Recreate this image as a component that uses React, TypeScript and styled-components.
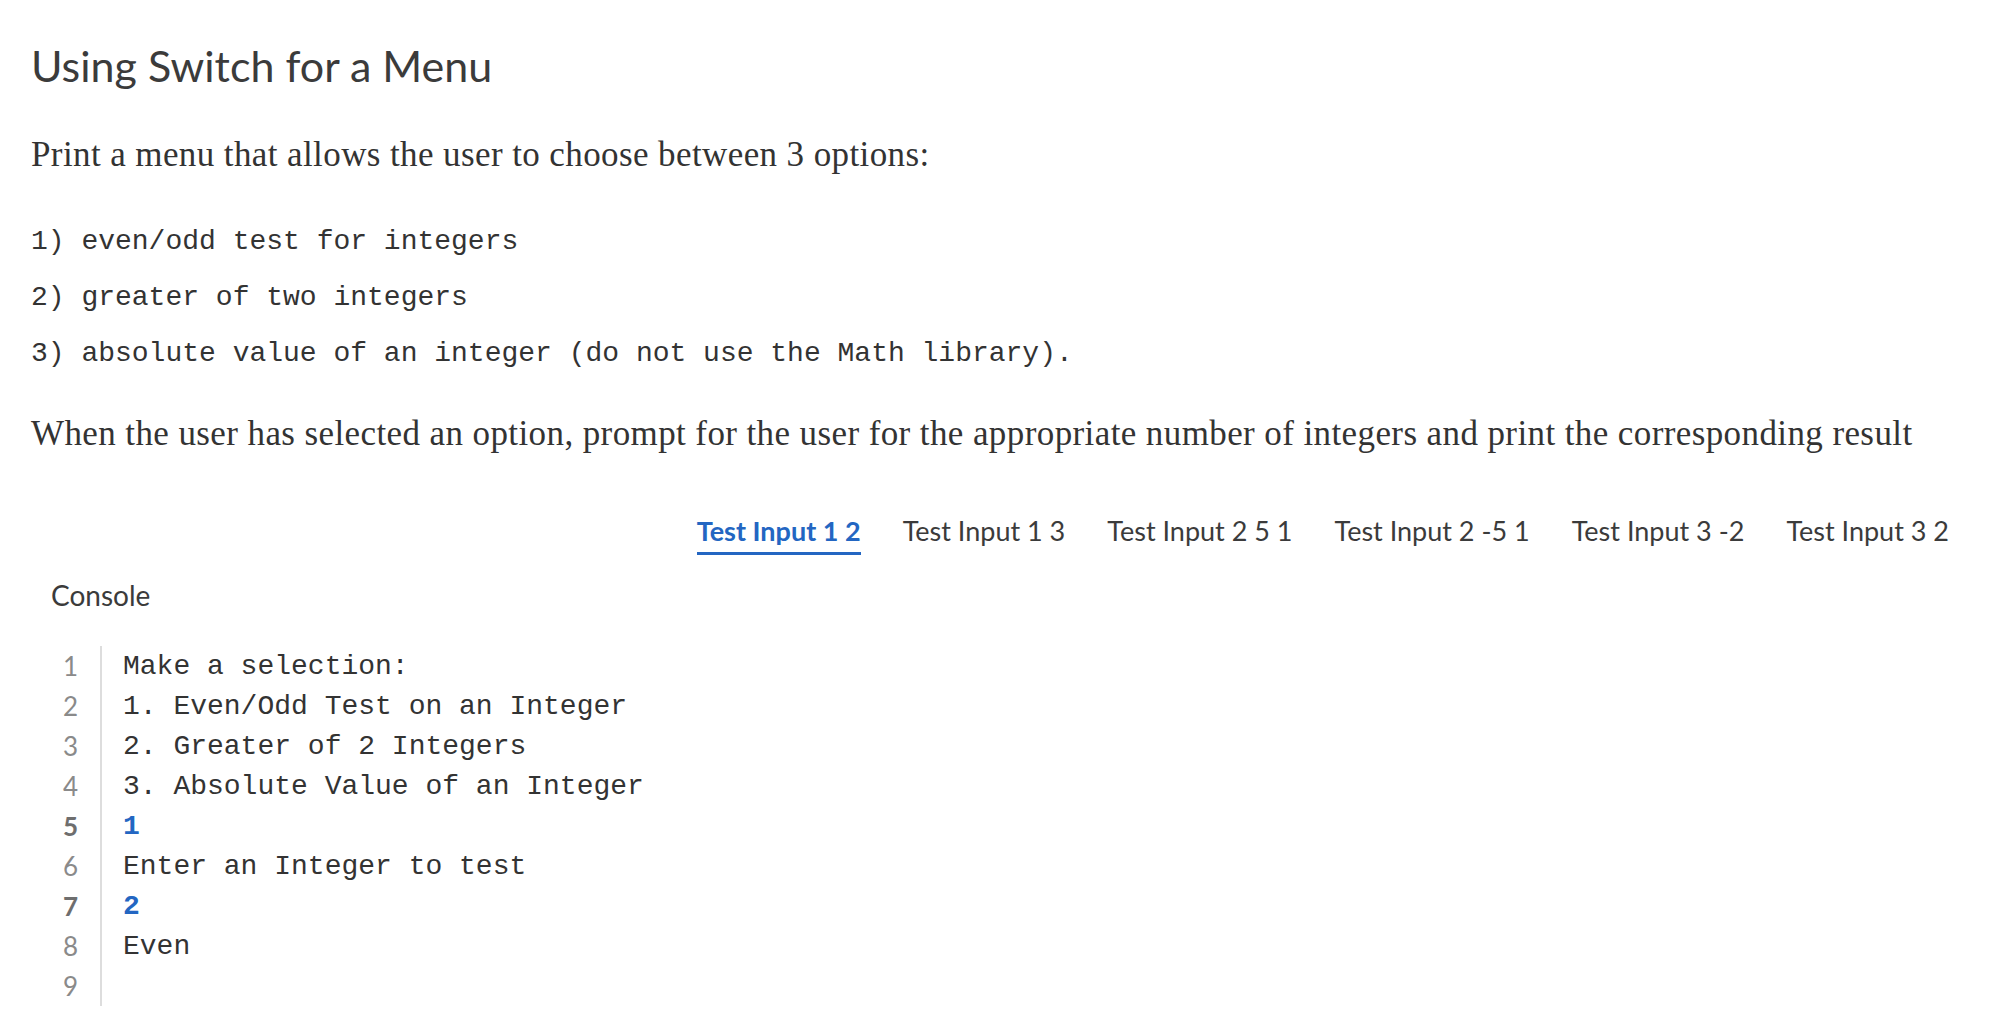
import React from 'react';
import styled, {createGlobalStyle} from 'styled-components';

const tabs = ['Test Input 1 2', 'Test Input 1 3', 'Test Input 2 5 1', 'Test Input 2 -5 1', 'Test Input 3 -2', 'Test Input 3 2'];

const consoleLines: {text: string; input?: boolean}[] = [
  {text: 'Make a selection:'},
  {text: '1. Even/Odd Test on an Integer'},
  {text: '2. Greater of 2 Integers'},
  {text: '3. Absolute Value of an Integer'},
  {text: '1', input: true},
  {text: 'Enter an Integer to test'},
  {text: '2', input: true},
  {text: 'Even'},
  {text: ''},
];

const App: React.FC = () => {
  return (
    <>
      <GlobalStyle/>
      <Page>
        <Title>Using Switch for a Menu</Title>
        <Paragraph>Print a menu that allows the user to choose between 3 options:</Paragraph>
        <CodeList>
          <CodeItem>1) even/odd test for integers</CodeItem>
          <CodeItem>2) greater of two integers</CodeItem>
          <CodeItem>3) absolute value of an integer (do not use the Math library).</CodeItem>
        </CodeList>
        <Paragraph>
          When the user has selected an option, prompt for the user for the appropriate number of integers and print the corresponding result
        </Paragraph>
        <TabBar>
          {tabs.map((t, i) => (
            <Tab key={t} $active={i === 0}>{t}</Tab>
          ))}
        </TabBar>
        <ConsoleLabel>Console</ConsoleLabel>
        <Console>
          {consoleLines.map((line, i) => (
            <ConsoleRow key={i}>
              <LineNo $input={line.input}>{i + 1}</LineNo>
              <LineText $input={line.input}>{line.text}</LineText>
            </ConsoleRow>
          ))}
        </Console>
      </Page>
    </>
  );
}

const GlobalStyle = createGlobalStyle`
  body {
    margin: 0;
    background: #fff;
    color: #3b3b3b;
    font-family: Lato, 'Liberation Sans', sans-serif;
  }
`;

const Page = styled.div`
  padding: 30px 45px 0 31px;
  display: flex;
  flex-direction: column;
`

const Title = styled.h1`
  margin: 0;
  font-family: Lato, sans-serif;
  font-weight: 400;
  font-size: 43px;
  line-height: 72px;
  color: #3b3b3b;
`

const Paragraph = styled.p`
  margin: 31px 0 0;
  font-family: 'Liberation Serif', serif;
  font-size: 35px;
  letter-spacing: 0.4px;
  line-height: 44px;
  color: #333;
`

const CodeList = styled.div`
  margin: 47px 0 9px;
  display: flex;
  flex-direction: column;
  gap: 20px;
`

const CodeItem = styled.div`
  font-family: 'Liberation Mono', monospace;
  font-size: 28px;
  line-height: 36px;
  color: #333;
`

const TabBar = styled.div`
  margin-top: 55px;
  display: flex;
  justify-content: flex-end;
  gap: 42px;
`

const Tab = styled.div<{$active?: boolean}>`
  font-family: Lato, sans-serif;
  font-size: 27px;
  line-height: 40px;
  font-weight: ${p => p.$active ? 700 : 400};
  color: ${p => p.$active ? '#2366c2' : '#3b3b3b'};
  border-bottom: 3px solid ${p => p.$active ? '#2366c2' : 'transparent'};
  padding-bottom: 1px;
`

const ConsoleLabel = styled.div`
  margin: 20px 0 0 20px;
  font-family: Lato, sans-serif;
  font-size: 28px;
  line-height: 40px;
  color: #3b3b3b;
`

const Console = styled.div`
  margin-top: 31px;
  display: flex;
  flex-direction: column;
`

const ConsoleRow = styled.div`
  display: flex;
  height: 40px;
  align-items: center;
`

const LineNo = styled.div<{$input?: boolean}>`
  width: 47px;
  padding-right: 22px;
  align-self: stretch;
  display: flex;
  align-items: center;
  justify-content: flex-end;
  border-right: 2px solid #ddd;
  font-family: Lato, sans-serif;
  font-size: 26px;
  font-weight: ${p => p.$input ? 700 : 400};
  color: ${p => p.$input ? '#6e6e6e' : '#8a8a8a'};
`

const LineText = styled.div<{$input?: boolean}>`
  padding-left: 21px;
  font-family: 'Liberation Mono', monospace;
  font-size: 28px;
  font-weight: ${p => p.$input ? 700 : 400};
  color: ${p => p.$input ? '#2366c2' : '#333'};
  white-space: pre;
`

export default App;
